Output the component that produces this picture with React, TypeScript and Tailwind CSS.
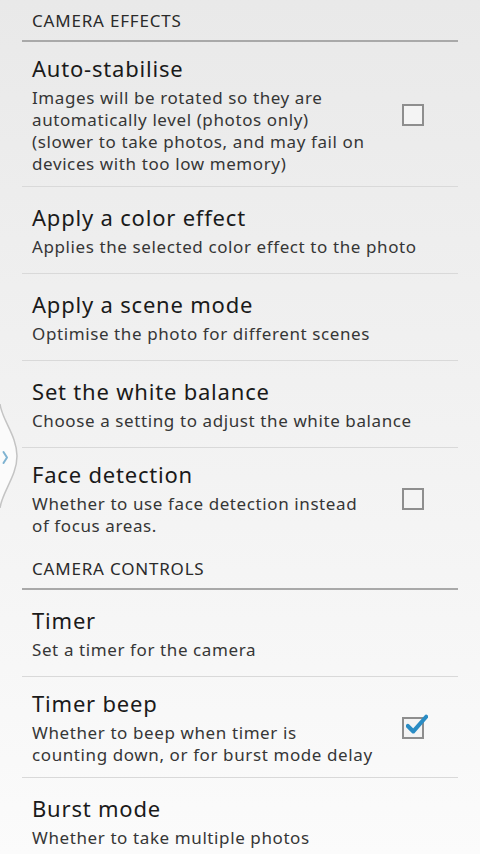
import React from "react";

const font = { fontFamily: '"Noto Sans", "Open Sans", sans-serif' };

function Checkbox({ checked }: { checked?: boolean }) {
  return (
    <div className="relative w-[22px] h-[22px] border-2 border-[#8e8e8e] bg-[#f4f4f4]">
      {checked && (
        <svg
          className="absolute left-[2px] top-[-5px]"
          width="22"
          height="22"
          viewBox="0 0 24 24"
        >
          <path
            d="M2 13 L8 19 L22 3"
            fill="none"
            stroke="#2a8cc4"
            strokeWidth="4.5"
            strokeLinecap="round"
            strokeLinejoin="round"
          />
        </svg>
      )}
    </div>
  );
}

function Header({ label }: { label: string }) {
  return (
    <div>
      <div className="h-[40px] flex items-center pl-[32px] pt-[1px] text-[17px] text-[#2a2a2a] tracking-[0.8px]">
        {label}
      </div>
      <div className="mx-[22px] h-[2px] bg-[#a9a9a9]" />
    </div>
  );
}

function Row({
  title,
  lines,
  checkbox,
  checked,
  divider = true,
}: {
  title: string;
  lines: string[];
  checkbox?: boolean;
  checked?: boolean;
  divider?: boolean;
}) {
  return (
    <div>
      <div className="flex items-center min-h-[86px] pt-[12px] pb-[11px] pl-[32px] pr-[56px]">
        <div className="flex-1 flex flex-col">
          <div className="text-[22px] leading-[28px] text-[#1a1a1a] tracking-[0.8px]">
            {title}
          </div>
          <div className="mt-[5px] text-[17px] leading-[22px] text-[#363636] tracking-[0.6px]">
            {lines.map((l, i) => (
              <div key={i} className="whitespace-nowrap">
                {l}
              </div>
            ))}
          </div>
        </div>
        {checkbox && <Checkbox checked={checked} />}
      </div>
      {divider && <div className="mx-[22px] h-[1px] bg-[#d9d9d9]" />}
    </div>
  );
}

export default function App() {
  return (
    <div
      className="relative w-[480px] h-[854px] overflow-hidden bg-linear-to-b from-[#e9e9e9] to-[#fbfbfb]"
      style={font}
    >
      <Header label="CAMERA EFFECTS" />
      <Row
        title="Auto-stabilise"
        lines={[
          "Images will be rotated so they are",
          "automatically level (photos only)",
          "(slower to take photos, and may fail on",
          "devices with too low memory)",
        ]}
        checkbox
      />
      <Row
        title="Apply a color effect"
        lines={["Applies the selected color effect to the photo"]}
      />
      <Row
        title="Apply a scene mode"
        lines={["Optimise the photo for different scenes"]}
      />
      <Row
        title="Set the white balance"
        lines={["Choose a setting to adjust the white balance"]}
      />
      <Row
        title="Face detection"
        lines={["Whether to use face detection instead", "of focus areas."]}
        checkbox
        divider={false}
      />
      <Header label="CAMERA CONTROLS" />
      <Row title="Timer" lines={["Set a timer for the camera"]} />
      <Row
        title="Timer beep"
        lines={[
          "Whether to beep when timer is",
          "counting down, or for burst mode delay",
        ]}
        checkbox
        checked
      />
      <Row
        title="Burst mode"
        lines={["Whether to take multiple photos"]}
        divider={false}
      />

      {/* side handle */}
      <svg
        className="absolute left-0 top-[400px]"
        width="24"
        height="112"
        viewBox="0 0 24 112"
      >
        <path
          d="M0 4 C 2 20, 17 36, 17 56 C 17 76, 2 92, 0 108"
          fill="#fbfbfb"
          stroke="#c4c4c4"
          strokeWidth="1.5"
        />
        <path
          d="M3.5 52 L7 57.5 L3.5 63"
          fill="none"
          stroke="#7fb3d1"
          strokeWidth="2"
          strokeLinecap="round"
          strokeLinejoin="round"
        />
      </svg>
    </div>
  );
}
